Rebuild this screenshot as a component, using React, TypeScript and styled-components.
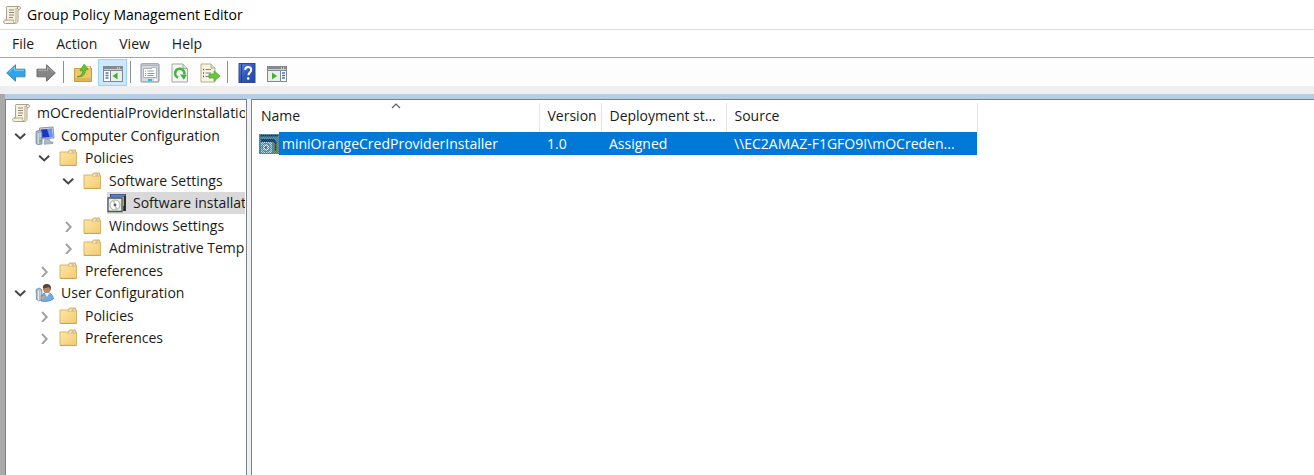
import React from 'react';
import styled, { createGlobalStyle } from 'styled-components';

const GlobalStyle = createGlobalStyle`
  * { box-sizing: border-box; }
  body {
    margin: 0;
    background: #fff;
    color: #1a1a1a;
    font-family: "Open Sans", "Noto Sans", sans-serif;
    font-size: 14px;
    line-height: 20px;
  }
  button { font: inherit; color: inherit; }
`;

const Window = styled.div`
  display: flex;
  flex-direction: column;
  min-height: 100vh;
`;

const TitleBar = styled.header`
  display: flex;
  align-items: center;
  gap: 5px;
  height: 30px;
  padding-left: 2px;
  border-bottom: 1px solid #dcdcdc;
  color: #000;
`;

const Title = styled.h1`
  margin: 0;
  font-size: 14px;
  font-weight: 400;
`;

const MenuBar = styled.nav`
  display: flex;
  align-items: center;
  gap: 22px;
  height: 28px;
  padding-left: 12px;
  border-bottom: 1px solid #a6a6a6;
`;

const MenuButton = styled.button`
  padding: 0;
  border: 0;
  background: none;
`;

const Toolbar = styled.div`
  display: flex;
  align-items: center;
  gap: 1px;
  height: 28px;
  padding-left: 1px;
  background: #fdfdfd;
`;

const ToolButton = styled.button<{ $active?: boolean }>`
  display: flex;
  align-items: center;
  justify-content: center;
  width: 29px;
  height: 27px;
  padding: 2px 0 0;
  border: 1px solid ${(p) => (p.$active ? '#99d1ff' : 'transparent')};
  background: ${(p) => (p.$active ? '#cce8ff' : 'none')};
`;

const Separator = styled.span`
  width: 1px;
  height: 22px;
  margin: 0 3px 0 2px;
  background: #8e8e8e;
`;

const Workspace = styled.main`
  flex: 1;
  display: flex;
  flex-direction: column;
  border-top: 8px solid #f0eeee;
`;

const BlueBand = styled.div`
  height: 5px;
  background: linear-gradient(90deg, #a9a9a9 5px, #b7cde3 5px);
`;

const Panes = styled.div`
  flex: 1;
  display: flex;
  gap: 4px;
  padding-left: 5px;
  background: linear-gradient(90deg, #a9a9a9 5px, #f0f0f0 5px);
`;

const TreePane = styled.nav`
  width: 242px;
  flex-shrink: 0;
  border: 1px solid #7b818c;
  border-bottom: 0;
  background: #fff;
`;

const Tree = styled.ul`
  display: grid;
  grid-auto-rows: 22px 23px;
  margin: 0;
  padding: 2px 1px 0 5px;
  list-style: none;
`;

const TreeRow = styled.li<{ $level: number }>`
  display: flex;
  align-items: center;
  gap: 6px;
  min-width: 0;
  padding-left: ${(p) => (p.$level ? (p.$level - 1) * 24 : 0)}px;
`;

const Toggle = styled.button`
  display: flex;
  align-items: center;
  justify-content: center;
  flex-shrink: 0;
  width: 18px;
  height: 20px;
  padding: 0;
  border: 0;
  background: none;
`;

const ToggleSpace = styled.span`
  flex-shrink: 0;
  width: 18px;
`;

const TreeItem = styled.span<{ $selected?: boolean }>`
  flex: 1;
  display: flex;
  align-items: center;
  gap: 6px;
  height: 100%;
  overflow: hidden;
  white-space: nowrap;
  background: ${(p) => (p.$selected ? '#d9d9d9' : 'none')};
`;

const ListPane = styled.section`
  flex: 1;
  min-width: 0;
  padding: 3px 0 0 1px;
  border: 1px solid #7b818c;
  border-width: 1px 0 0 1px;
  background: #fff;
`;

const Table = styled.table`
  width: 724px;
  table-layout: fixed;
  border-collapse: collapse;
`;

const HeadCell = styled.th<{ $width: number }>`
  position: relative;
  width: ${(p) => p.$width}px;
  height: 29px;
  padding: 0 7px 4px 8px;
  border-right: 1px solid #e5e5e5;
  font-weight: 400;
  text-align: left;
  white-space: nowrap;
  overflow: hidden;
`;

const SortMark = styled.svg`
  position: absolute;
  top: 0;
  left: 50%;
  margin-left: -5px;
`;

const Cell = styled.td`
  height: 23px;
  padding: 0 7px 0 8px;
  background: #0078d7;
  color: #fff;
  white-space: nowrap;
  overflow: hidden;
`;

const NameCell = styled(Cell)`
  padding: 0 0 0 6px;
  background: #fff;
`;

const NameContent = styled.div`
  display: flex;
  align-items: center;
`;

const NameLabel = styled.span`
  flex: 1;
  height: 23px;
  padding: 2px 0 0 3px;
  background: #0078d7;
`;

const Svg = styled.svg`
  display: block;
  flex-shrink: 0;
`;

const Icon = ({ children }: { children: React.ReactNode }) => (
  <Svg width="20" height="20" viewBox="0 0 20 20" fill="none" aria-hidden="true">{children}</Svg>
);

const ScrollIcon = () => (
  <Icon>
    <path d="M5 1.5h12.2c1.4 0 1.8 2.8.2 3.2H16v10.5c0 2-.8 3.3-2.4 3.3H3.2c-2 0-2.2-3.4 0-3.5H4.5V4.2C4.5 3 3.8 2 5 1.5Z" fill="#f6f1de" stroke="#aaa28a" />
    <path d="M14 3v12c0 2-.7 3-1.6 3-1.4 0-1.6-3-.4-3H3" stroke="#b4aa8b" />
    <path d="M16 2c-1 .3-1 2.2.4 2.5" stroke="#8f8773" />
    <path d="M7 5h5M7 7.5h5M7 10h5M7 12.5h4" stroke="#8b897f" />
  </Icon>
);

const ArrowIcon = ({ back }: { back?: boolean }) => (
  <Icon>
    {back
      ? <path d="M.7 10 9.5 1.8v4.4H19v7.6H9.5v4.4Z" fill="#2ea4ea" stroke="#4d88ad" strokeLinejoin="round" />
      : <path d="M19.3 10 10.5 1.8v4.4H1v7.6h9.5v4.4Z" fill="#868686" stroke="#6c6c6c" strokeLinejoin="round" />}
    {back
      ? <path d="M3 9.3 8.5 4v3.3H18" stroke="#7bcdf8" />
      : <path d="M2 7.3h9.5V4L17 9.3" stroke="#adadad" />}
  </Icon>
);

const FolderUpIcon = () => (
  <Icon>
    <path d="M1.5 5.5h8l1.5-2h6.5v2h1v13h-17Z" fill="#efc66b" stroke="#c99b45" />
    <path d="M2 15h16v3H2Z" fill="#e0b458" />
    <path d="M13 4.2h4" stroke="#fff1c4" strokeWidth="1.5" />
    <path d="M4.2 13.8c3.8-.6 5.5-2.8 5.7-6.2l-3 .2L11 1.2l4.2 5-2.5.7c-.5 5-3.3 7.3-8.5 6.9Z" fill="#5cc932" stroke="#3c9e23" strokeWidth=".7" />
  </Icon>
);

const PaneIcon = ({ flip }: { flip?: boolean }) => (
  <Icon>
    <rect x=".5" y="3.5" width="19" height="15" fill="#fff" stroke="#83898f" />
    <path d="M1 4h18v4H1Z" fill="#858b91" />
    <path d="M1 6.5h18" stroke="#c7cdd3" />
    <path d="M14 5h1M16 5h1" stroke="#fff" />
    {flip ? (
      <>
        <path d="M13.5 8v10" stroke="#83898f" />
        <path d="M15 10h3M15 12.5h3M15 15h3" stroke="#4a79b0" strokeWidth="1.3" />
        <path d="M1 8h12v10H1Z" fill="#e9f0eb" />
        <path d="M5 9.5v7l5-3.5Z" fill="#43b02f" />
      </>
    ) : (
      <>
        <path d="M7.5 8v10" stroke="#83898f" />
        <path d="M2.5 10h3M2.5 12.5h3M2.5 15h3" stroke="#4a79b0" strokeWidth="1.3" />
        <path d="M8 8h11v10H8Z" fill="#e9f0eb" />
        <path d="M14.5 9.5v7l-5-3.5Z" fill="#43b02f" />
      </>
    )}
  </Icon>
);

const PropertiesIcon = () => (
  <Icon>
    <rect x="1" y=".8" width="18" height="18.2" rx="1" fill="#d6dade" stroke="#888e94" />
    <path d="M2 2.5h16" stroke="#b0b6bc" />
    <path d="M3.5 5.5h8v-1h5v10h-13Z" fill="#fff" stroke="#aab0b7" />
    <path d="M7.5 8h6M7.5 10.5h7M7.5 12.5h6" stroke="#8296a7" />
    <path d="M5 8h1M5 10.5h1M5 12.5h1" stroke="#4aa0d1" />
    <path d="M8 17h4" stroke="#30b4e4" strokeWidth="2" />
    <path d="M14 17h3" stroke="#fff" strokeWidth="1.5" />
  </Icon>
);

const RefreshIcon = () => (
  <Icon>
    <path d="M2 1h11l4.5 4.5V19H2Z" fill="#f5f5f4" stroke="#a5a5a5" />
    <path d="M13 1v4.5h4.5" fill="#ddd" stroke="#a5a5a5" />
    <path d="M8 14.6a4.6 4.6 0 1 1 6.2-3.1" stroke="#42b53b" strokeWidth="2.6" />
    <path d="m10 11.5 7 .2-3.2 5Z" fill="#42b53b" />
  </Icon>
);

const ExportIcon = () => (
  <Icon>
    <path d="M1 1h10l4 4v14H1Z" fill="#f8f4df" stroke="#b3ad93" />
    <path d="M11 1v4h4" fill="#e5dfc4" stroke="#b3ad93" />
    <path d="M5.5 6.5H11M5.5 10H11M5.5 13.5H11" stroke="#8a7e91" />
    <path d="M3 6.5h1M3 10h1M3 13.5h1" stroke="#534747" strokeWidth="1.3" />
    <path d="M9 11h5V7.8l6 5.2-6 5.2V15H9Z" fill="#62cb37" stroke="#47a52b" strokeWidth=".7" />
  </Icon>
);

const HelpIcon = () => (
  <Icon>
    <defs>
      <linearGradient id="helpCover" x1="0" y1="0" x2="1" y2="1">
        <stop stopColor="#6384d8" /><stop offset=".5" stopColor="#3159bd" /><stop offset="1" stopColor="#2447a5" />
      </linearGradient>
    </defs>
    <rect x="2" y=".5" width="16" height="19" fill="url(#helpCover)" stroke="#304b91" />
    <path d="M4.5 1v18" stroke="#203d91" />
    <path d="M8.2 7c0-2.2 1.2-3 3-3s3 1 3 2.8c0 2.5-2.8 2.8-2.8 5.5" stroke="#fff" strokeWidth="2" />
    <circle cx="11.2" cy="15.5" r="1.3" fill="#fff" />
  </Icon>
);

const FolderIcon = () => (
  <Icon>
    <defs>
      <linearGradient id="folderFace" x1="0" y1="0" x2="1" y2="1">
        <stop stopColor="#fee7a8" /><stop offset="1" stopColor="#f3cb72" />
      </linearGradient>
    </defs>
    <path d="M1 4h8l1.5-2h6v2h1v13.3H1Z" fill="url(#folderFace)" stroke="#d9b368" strokeLinejoin="round" />
    <path d="M10.8 2.6h5.4v2.6H9Z" fill="#fff3cf" stroke="#d5ad60" strokeWidth=".7" />
    <path d="M12.5 4h2.5" stroke="#8fa3a8" />
    <path d="M1 17.5h16.5" stroke="#cda45a" />
  </Icon>
);

const ComputerIcon = () => (
  <Icon>
    <path d="M4.5 2 18 1l1 11-13.5 1Z" fill="#ccd3df" stroke="#8d98ac" />
    <path d="M6 3.5 16.8 2.7l.7 8.2-10.8.8Z" fill="#1835c7" />
    <path d="m12 3 4.8-.3.7 8.2-3 .2Z" fill="#6e92f4" />
    <path d="m10 13 4-.4 1 3 3 .5v1.4l-9 .8Z" fill="#aeb9c7" stroke="#8290a2" strokeWidth=".6" />
    <path d="M1 5.5 4.5 4 7 6v12l-4 .7-2-1.2Z" fill="#9fb4c9" stroke="#687d92" strokeWidth=".7" />
    <path d="M3.2 7v11M4.5 8H6M4.5 10H6" stroke="#dce7ef" />
    <circle cx="5.3" cy="15" r="1" fill="#4bba4c" />
  </Icon>
);

const UserIcon = () => (
  <Icon>
    <path d="M6 18c-.5-5 1.5-8 5.5-8.5 4.5-.3 6.5 3 7 6.5-2.8 2.2-8 3.2-12.5 2Z" fill="#72ace2" stroke="#477eb7" strokeWidth=".7" />
    <path d="m10 10 2 4 2.5-4Z" fill="#eef7ff" />
    <circle cx="11.8" cy="6" r="3.8" fill="#bd875f" />
    <path d="M8 5.5C7.5 1.5 10 .7 12.5 1c3 .4 4 2.7 3 6.2L14 4.3Z" fill="#59463a" />
    <path d="M1 6.5 4.2 5l2.6 1.6v10.2L4 18l-2.4-1.4Z" fill="#aebdcc" stroke="#667d94" strokeWidth=".7" />
    <path d="M3.6 7.5v10M5 9h1M5 11h1" stroke="#e9f0f5" />
    <path d="m6 14 4-1.4v2L7 17Z" fill="#d7a27c" />
  </Icon>
);

const InstallIcon = () => (
  <Icon>
    <path d="M3 1h16v17h-3V4H3Z" fill="#3d4772" />
    <path d="M4 1.5h14v3H4Z" fill="#5c7bbd" />
    <path d="M13 4h4v9h-4Z" fill="#f0c64e" />
    <path d="M17.8 3v15" stroke="#292931" strokeWidth="2" />
    <path d="M1 5h14v13.5H1Z" fill="#e8ece9" stroke="#4f5355" strokeWidth="1.3" />
    <circle cx="8" cy="12" r="5" fill="#fff" stroke="#a6adb0" />
    <path d="m8 12-3-4 3-1ZM8 12l3 4-3 1Z" fill="#b1d5ba" />
    <circle cx="8" cy="12" r="1.4" fill="#565c60" />
  </Icon>
);

const PackageIcon = () => (
  <Icon>
    <defs>
      <pattern id="selectionDots" width="2" height="2" patternUnits="userSpaceOnUse">
        <path d="M0 0h1v1H0ZM1 1h1v1H1Z" fill="#0078d7" />
      </pattern>
    </defs>
    <path d="M0 0h20v20H0Z" fill="#5f96b0" />
    <path d="M1 1h18v1.5H1ZM2 5h13l3 4v2l-4-3H2Z" fill="#14385c" />
    <path d="M2 8h11v11H2Z" fill="#b5dcec" />
    <circle cx="7" cy="13.5" r="4" fill="#e4f6fd" stroke="#4c83a4" />
    <circle cx="7" cy="13.5" r="1.2" fill="#2c6288" />
    <path d="M14 9h5v10h-5Z" fill="#8b9a62" />
    <path d="M16.5 9v8" stroke="#173c58" strokeWidth="1.5" />
    <path d="M0 0h20v20H0Z" fill="url(#selectionDots)" opacity=".7" />
  </Icon>
);

const Chevron = ({ open }: { open?: boolean }) => (
  <Svg width="12" height="12" viewBox="0 0 12 12" fill="none" aria-hidden="true">
    {open
      ? <path d="m1.2 3.8 5 4.7 5-4.7" stroke="#454545" strokeWidth="2" />
      : <path d="m4 2 4.7 5L4 12" stroke="#a3a3a3" strokeWidth="2" />}
  </Svg>
);

type Node = {
  label: string;
  level: number;
  icon: React.ReactNode;
  open?: boolean;
  leaf?: boolean;
  selected?: boolean;
};

const nodes: Node[] = [
  { label: 'mOCredentialProviderInstallation', level: 0, icon: <ScrollIcon />, leaf: true },
  { label: 'Computer Configuration', level: 1, icon: <ComputerIcon />, open: true },
  { label: 'Policies', level: 2, icon: <FolderIcon />, open: true },
  { label: 'Software Settings', level: 3, icon: <FolderIcon />, open: true },
  { label: 'Software installation', level: 4, icon: <InstallIcon />, leaf: true, selected: true },
  { label: 'Windows Settings', level: 3, icon: <FolderIcon /> },
  { label: 'Administrative Templates', level: 3, icon: <FolderIcon /> },
  { label: 'Preferences', level: 2, icon: <FolderIcon /> },
  { label: 'User Configuration', level: 1, icon: <UserIcon />, open: true },
  { label: 'Policies', level: 2, icon: <FolderIcon /> },
  { label: 'Preferences', level: 2, icon: <FolderIcon /> },
];

export default function App() {
  return (
    <>
      <GlobalStyle />
      <Window>
        <TitleBar>
          <ScrollIcon />
          <Title>Group Policy Management Editor</Title>
        </TitleBar>
        <MenuBar>
          {['File', 'Action', 'View', 'Help'].map((name) => (
            <MenuButton key={name}>{name}</MenuButton>
          ))}
        </MenuBar>
        <Toolbar>
          <ToolButton aria-label="Back"><ArrowIcon back /></ToolButton>
          <ToolButton aria-label="Forward"><ArrowIcon /></ToolButton>
          <Separator />
          <ToolButton aria-label="Up one level"><FolderUpIcon /></ToolButton>
          <ToolButton aria-label="Show or hide console tree" $active><PaneIcon /></ToolButton>
          <Separator />
          <ToolButton aria-label="Properties"><PropertiesIcon /></ToolButton>
          <ToolButton aria-label="Refresh"><RefreshIcon /></ToolButton>
          <ToolButton aria-label="Export list"><ExportIcon /></ToolButton>
          <Separator />
          <ToolButton aria-label="Help topics"><HelpIcon /></ToolButton>
          <ToolButton aria-label="Show or hide action pane"><PaneIcon flip /></ToolButton>
        </Toolbar>
        <Workspace>
          <BlueBand />
          <Panes>
            <TreePane>
              <Tree>
                {nodes.map((node, i) => (
                  <TreeRow key={i} $level={node.level}>
                    {!node.leaf && (
                      <Toggle aria-label={node.label} aria-expanded={!!node.open}>
                        <Chevron open={node.open} />
                      </Toggle>
                    )}
                    {node.leaf && node.level > 0 && <ToggleSpace />}
                    <TreeItem $selected={node.selected}>
                      {node.icon}
                      {node.label}
                    </TreeItem>
                  </TreeRow>
                ))}
              </Tree>
            </TreePane>
            <ListPane>
              <Table>
                <thead>
                  <tr>
                    <HeadCell $width={286}>
                      Name
                      <SortMark width="10" height="6" viewBox="0 0 10 6" fill="none" aria-hidden="true">
                        <path d="m1 5 4-4 4 4" stroke="#606060" strokeWidth="1.2" />
                      </SortMark>
                    </HeadCell>
                    <HeadCell $width={62}>Version</HeadCell>
                    <HeadCell $width={125}>Deployment st...</HeadCell>
                    <HeadCell $width={251}>Source</HeadCell>
                  </tr>
                </thead>
                <tbody>
                  <tr>
                    <NameCell>
                      <NameContent>
                        <PackageIcon />
                        <NameLabel>miniOrangeCredProviderInstaller</NameLabel>
                      </NameContent>
                    </NameCell>
                    <Cell>1.0</Cell>
                    <Cell>Assigned</Cell>
                    <Cell>{'\\\\EC2AMAZ-F1GFO9I\\mOCreden...'}</Cell>
                  </tr>
                </tbody>
              </Table>
            </ListPane>
          </Panes>
        </Workspace>
      </Window>
    </>
  );
}
